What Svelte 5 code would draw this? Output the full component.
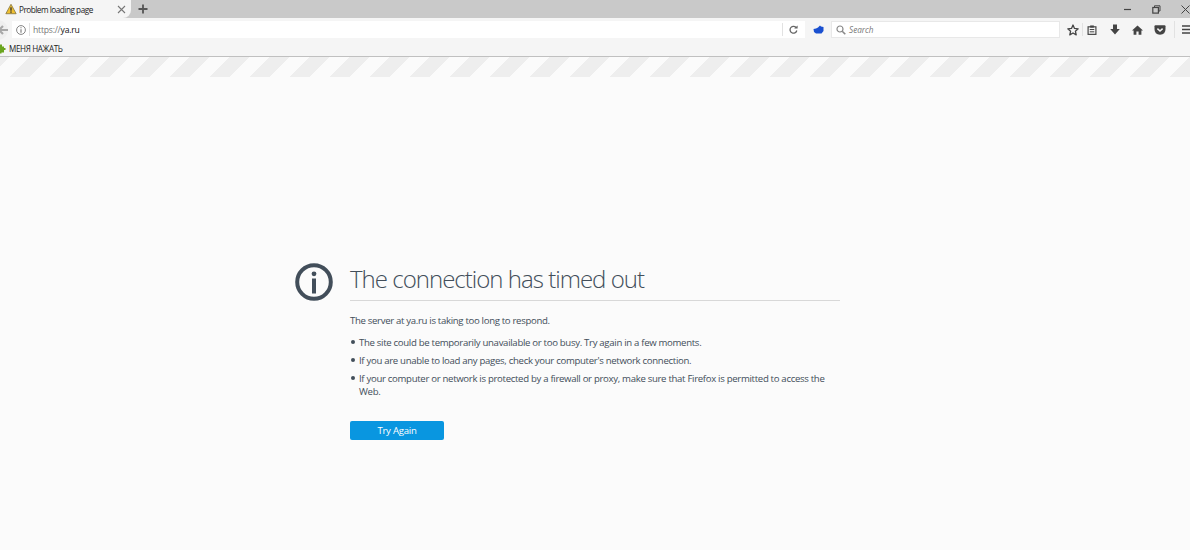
<script>
  const tips = [
    "The site could be temporarily unavailable or too busy. Try again in a few moments.",
    "If you are unable to load any pages, check your computer's network connection.",
    "If your computer or network is protected by a firewall or proxy, make sure that Firefox is permitted to access the Web."
  ];
</script>

<div class="window">
  <div class="tabstrip">
    <div class="tab">
      <svg width="12" height="12" viewBox="0 0 14 13" class="warn">
        <path d="M7 1 L13 12 H1 Z" fill="#f0c030" stroke="#8a7a40" stroke-width="1" stroke-linejoin="round" />
        <rect x="6.2" y="4.5" width="1.6" height="4" fill="#333" />
        <rect x="6.2" y="9.3" width="1.6" height="1.6" fill="#333" />
      </svg>
      <span class="tab-title">Problem loading page</span>
      <svg width="9" height="9" viewBox="0 0 9 9" class="tab-close">
        <path d="M1 1 L8 8 M8 1 L1 8" stroke="#777" stroke-width="1.1" />
      </svg>
    </div>
    <svg width="10" height="10" viewBox="0 0 10 10" class="newtab">
      <path d="M5 0.5 V9.5 M0.5 5 H9.5" stroke="#555" stroke-width="1.8" />
    </svg>
    <div class="wincontrols">
      <svg width="9" height="9" viewBox="0 0 9 9"><path d="M1 4.5 H8" stroke="#444" stroke-width="1.2" /></svg>
      <svg width="9" height="9" viewBox="0 0 9 9">
        <path d="M2.5 2.5 V0.8 H8 V6 H6.4" fill="none" stroke="#444" />
        <rect x="0.8" y="2.5" width="5.6" height="5.6" fill="none" stroke="#444" stroke-width="1.2" />
      </svg>
      <svg width="9" height="9" viewBox="0 0 9 9"><path d="M0.5 0.5 L8.5 8.5 M8.5 0.5 L0.5 8.5" stroke="#444" /></svg>
    </div>
  </div>

  <div class="navbar">
    <div class="backbtn">
      <svg width="10" height="10" viewBox="0 0 10 10"><path d="M5 1 L1 5 L5 9 M1 5 H10" fill="none" stroke="#a8a8a8" stroke-width="2.2" /></svg>
    </div>
    <div class="urlbar">
      <svg width="10" height="10" viewBox="0 0 10 10" class="site-info">
        <circle cx="5" cy="5" r="4.4" fill="none" stroke="#777" stroke-width="0.9" />
        <path d="M5 4.2 V7.8 M5 2.2 V3.3" stroke="#777" stroke-width="1.1" />
      </svg>
      <span class="sep"></span>
      <span class="url"><span class="scheme">https://</span>ya.ru</span>
      <span class="sep reload-sep"></span>
      <svg width="9" height="9" viewBox="0 0 9 9" class="reload">
        <path d="M7.4 3 A3.4 3.4 0 1 0 7.8 5.5" fill="none" stroke="#666" stroke-width="1.3" />
        <path d="M5.2 3.6 H8.6 V0.4 Z" fill="#666" />
      </svg>
    </div>
    <svg width="11" height="9" viewBox="0 0 11 9" class="ext">
      <path d="M0.5 4 L3 3.5 L5 2.5 L7 0.5 L8 1.5 L10.5 2 L10.5 6 L8.5 8.5 H3 L1 7 Z" fill="#1a50d0" />
    </svg>
    <div class="searchbar">
      <svg width="10" height="10" viewBox="0 0 10 10">
        <circle cx="4" cy="4" r="3" fill="none" stroke="#888" stroke-width="1.2" />
        <path d="M6.2 6.2 L9.3 9.3" stroke="#888" stroke-width="1.6" />
      </svg>
      <span>Search</span>
    </div>
    <div class="tools">
      <svg width="12" height="12" viewBox="0 0 12 12" class="star">
        <path d="M6 1 L7.5 4.4 L11.2 4.8 L8.4 7.2 L9.2 10.9 L6 9 L2.8 10.9 L3.6 7.2 L0.8 4.8 L4.5 4.4 Z" fill="none" stroke="#444" stroke-width="1.3" stroke-linejoin="round" />
      </svg>
      <span class="sep tool-sep"></span>
      <svg width="10" height="10" viewBox="0 0 10 11" class="clip">
        <rect x="0.7" y="2" width="8.6" height="8.3" fill="none" stroke="#444" stroke-width="1.3" />
        <rect x="3" y="0.5" width="4" height="2.4" fill="#444" />
        <path d="M2.5 5 H7.5 M2.5 7.5 H7.5" stroke="#444" stroke-width="1.1" />
      </svg>
      <svg width="10" height="11" viewBox="0 0 10 11" class="down">
        <path d="M3 0.5 H7 V5 H9.8 L5 10.5 L0.2 5 H3 Z" fill="#444" />
      </svg>
      <svg width="11" height="10" viewBox="0 0 11 10" class="home">
        <path d="M5.5 0.5 L11 5.4 H9.4 V9.8 H6.6 V6.6 H4.4 V9.8 H1.6 V5.4 H0 Z" fill="#444" />
      </svg>
      <svg width="12" height="10" viewBox="0 0 12 10" class="pocket">
        <path d="M0.5 1.2 Q0.5 0.3 1.5 0.3 H10.5 Q11.5 0.3 11.5 1.2 V4 Q11.5 9.7 6 9.7 Q0.5 9.7 0.5 4 Z" fill="#444" />
        <path d="M3.4 3.6 L6 6 L8.6 3.6" fill="none" stroke="#f5f5f5" stroke-width="1.5" />
      </svg>
      <span class="sep menu-sep"></span>
      <svg width="11" height="9" viewBox="0 0 11 9" class="menu">
        <path d="M0 1 H11 M0 4.5 H11 M0 8 H11" stroke="#444" stroke-width="1.7" />
      </svg>
    </div>
  </div>

  <div class="bookmarks">
    <svg width="9" height="10" viewBox="0 0 9 10">
      <path d="M0 1.5 H2.5 V0.5 H5 V2.5 H7 V4 H8.5 V6 H7 V8.5 H4.5 V9.5 H2 V8.5 H0 Z" fill="#6aa51e" />
    </svg>
    <span>МЕНЯ НАЖАТЬ</span>
  </div>

  <div class="stripes"></div>

  <main class="page">
    <div class="error">
      <svg width="38" height="38" viewBox="0 0 38 38" class="info-icon">
        <circle cx="19" cy="19" r="16.8" fill="none" stroke="#424e5a" stroke-width="4" />
        <circle cx="19" cy="10.8" r="2.4" fill="#424e5a" />
        <rect x="17" y="15.5" width="4" height="15" fill="#424e5a" />
      </svg>
      <div class="body">
        <h1>The connection has timed out</h1>
        <p>The server at ya.ru is taking too long to respond.</p>
        <ul>
          {#each tips as tip}
            <li>{tip}</li>
          {/each}
        </ul>
        <button>Try Again</button>
      </div>
    </div>
  </main>
</div>

<style>
  :global(body) {
    background: #fbfbfb;
  }
  .window {
    width: 1190px;
    height: 550px;
    overflow: hidden;
    display: flex;
    flex-direction: column;
    font-family: "Open Sans", "Noto Sans", sans-serif;
  }
  .tabstrip {
    height: 18px;
    background: #c9c9c9;
    display: flex;
    align-items: center;
    flex: none;
  }
  .tab {
    width: 131px;
    height: 18px;
    background: #f5f5f5;
    border-bottom-right-radius: 8px;
    display: flex;
    align-items: center;
    box-sizing: border-box;
    padding-left: 5px;
    flex: none;
  }
  .warn {
    flex: none;
  }
  .tab-title {
    font-size: 8.2px;
    letter-spacing: -0.48px;
    color: #222;
    margin-left: 2px;
    white-space: nowrap;
    width: 98px;
  }
  .tab-close {
    flex: none;
  }
  .newtab {
    margin-left: 7px;
  }
  .wincontrols {
    margin-left: auto;
    display: flex;
    gap: 20px;
  }
  .navbar {
    height: 23px;
    background: #f5f5f5;
    display: flex;
    align-items: center;
    flex: none;
  }
  .backbtn {
    width: 12px;
    height: 20px;
    margin-left: -4px;
    padding-left: 2px;
    box-sizing: border-box;
    background: #efefef;
    border-radius: 0 10px 10px 0;
    display: flex;
    align-items: center;
    justify-content: center;
    flex: none;
  }
  .urlbar {
    width: 793px;
    height: 17px;
    background: #fff;
    display: flex;
    align-items: center;
    box-sizing: border-box;
    padding-left: 4px;
    flex: none;
    margin-left: 4px;
  }
  .site-info {
    flex: none;
  }
  .sep {
    width: 1px;
    height: 13px;
    background: #e2e2e2;
    flex: none;
  }
  .urlbar .sep {
    margin-left: 3px;
  }
  .url {
    font-size: 8.6px;
    letter-spacing: -0.22px;
    color: #111;
    margin-left: 3px;
  }
  .scheme {
    color: #777;
  }
  .reload-sep {
    margin-left: auto !important;
  }
  .reload {
    margin: 0 7px 0 6px;
    flex: none;
  }
  .ext {
    margin-left: 8px;
    flex: none;
  }
  .searchbar {
    width: 229px;
    height: 17px;
    margin-left: 7px;
    background: #fff;
    border: 1px solid #e8e8e8;
    box-sizing: border-box;
    display: flex;
    align-items: center;
    padding-left: 4px;
    gap: 3px;
    font-size: 8.2px;
    font-style: italic;
    color: #777;
    flex: none;
  }
  .tools {
    display: flex;
    align-items: center;
    margin-left: 7px;
    flex: none;
  }
  .tool-sep {
    margin: 0 4px 0 3px;
  }
  .down {
    margin-left: 13px;
  }
  .home {
    margin-left: 12px;
  }
  .pocket {
    margin-left: 11px;
  }
  .menu-sep {
    margin-left: 8px;
    height: 17px;
  }
  .menu {
    margin-left: 7px;
  }
  .bookmarks {
    height: 16px;
    box-sizing: border-box;
    background: #f5f5f5;
    border-bottom: 1px solid #c0c0c0;
    display: flex;
    align-items: center;
    gap: 3px;
    font-size: 8.1px;
    letter-spacing: -0.36px;
    color: #222;
    flex: none;
  }
  .bookmarks svg {
    margin-left: -3px;
  }
  .stripes {
    height: 20px;
    flex: none;
    background-image: linear-gradient(135deg, #eeeeee 12.5%, #fbfbfb 12.5%, #fbfbfb 37.5%, #eeeeee 37.5%, #eeeeee 62.5%, #fbfbfb 62.5%, #fbfbfb 87.5%, #eeeeee 87.5%);
    background-size: 40px 40px;
  }
  .page {
    flex: 1;
    background: #fbfbfb;
  }
  .error {
    display: flex;
    margin: 186px 0 0 295px;
    width: 545px;
  }
  .info-icon {
    flex: none;
    margin: 0 17px 0 0;
  }
  .body {
    flex: 1;
    color: #424e5a;
  }
  h1 {
    margin: 0;
    font-size: 24px;
    font-weight: 300;
    letter-spacing: -0.98px;
    line-height: 32px;
    height: 37px;
    border-bottom: 1px solid #d8d8d8;
    white-space: nowrap;
  }
  p {
    margin: 13px 0 0;
    font-size: 9.6px;
    letter-spacing: -0.32px;
    line-height: 13px;
  }
  ul {
    list-style: none;
    margin: 9px 0 0;
    padding: 0 0 0 9px;
  }
  li {
    position: relative;
    font-size: 9.6px;
    letter-spacing: -0.31px;
    line-height: 13px;
    margin-bottom: 5.2px;
  }
  li::before {
    content: "";
    position: absolute;
    left: -8px;
    top: 4px;
    width: 4px;
    height: 4px;
    border-radius: 50%;
    background: #424e5a;
  }
  button {
    display: block;
    margin-top: 23px;
    width: 94px;
    height: 19px;
    background: #0996e0;
    border: none;
    border-radius: 2px;
    color: #fff;
    font: inherit;
    font-size: 9.6px;
    letter-spacing: -0.25px;
    padding: 0;
  }
</style>
